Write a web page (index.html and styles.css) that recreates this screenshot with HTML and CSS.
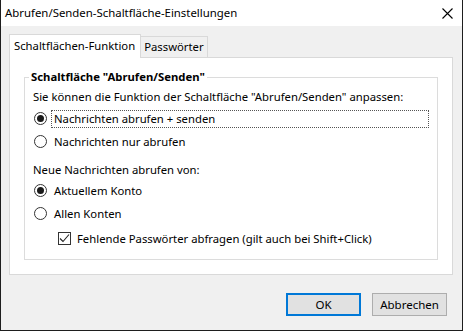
FILE: index.html
```html
<!DOCTYPE html>
<html lang="de">
<head>
<meta charset="utf-8">
<title>Abrufen/Senden-Schaltfläche-Einstellungen</title>
<link rel="stylesheet" href="styles.css">
</head>
<body>
<div class="window">
  <div class="titlebar">
    <span class="title">Abrufen/Senden-Schaltfläche-Einstellungen</span>
    <svg class="close" width="11" height="11" viewBox="0 0 11 11"><path d="M0.5 0.5L10.5 10.5M10.5 0.5L0.5 10.5" stroke="#000" stroke-width="1.1" fill="none"/></svg>
  </div>
  <div class="content">
    <div class="tabs">
      <div class="tab active">Schaltflächen-Funktion</div>
      <div class="tab">Passwörter</div>
    </div>
    <div class="panel">
      <fieldset class="group">
        <legend>Schaltfläche "Abrufen/Senden"</legend>
        <div class="row text-row r-intro">Sie können die Funktion der Schaltfläche "Abrufen/Senden" anpassen:</div>
        <div class="row opt">
          <span class="radio checked"></span>
          <span class="label focus">Nachrichten abrufen + senden</span>
        </div>
        <div class="row opt gap2">
          <span class="radio"></span>
          <span class="label">Nachrichten nur abrufen</span>
        </div>
        <div class="row text-row gap7">Neue Nachrichten abrufen von:</div>
        <div class="row opt">
          <span class="radio checked"></span>
          <span class="label">Aktuellem Konto</span>
        </div>
        <div class="row opt gap2">
          <span class="radio"></span>
          <span class="label">Allen Konten</span>
        </div>
        <div class="row opt gap4 sub">
          <span class="check"><svg width="11" height="11" viewBox="0 0 11 11"><path d="M1 5.5L4 8.5L10 1.5" stroke="#222" stroke-width="1.1" fill="none"/></svg></span>
          <span class="label">Fehlende Passwörter abfragen (gilt auch bei Shift+Click)</span>
        </div>
      </fieldset>
    </div>
    <div class="footer">
      <button class="btn default">OK</button>
      <button class="btn">Abbrechen</button>
    </div>
  </div>
</div>
</body>
</html>
```

FILE: styles.css
```css
* { box-sizing: border-box; }
html, body { margin: 0; padding: 0; }
body {
  font-family: "Noto Sans", "Open Sans", sans-serif;
  font-size: 11.3px;
  color: #000;
  background: #f0f0f0;
}
.window {
  width: 463px;
  height: 331px;
  background: #f0f0f0;
  border: 1px solid #1e1e1e;
  border-top: 0;
  display: flex;
  flex-direction: column;
}
.titlebar {
  height: 26px;
  background: #fff;
  display: flex;
  align-items: center;
  justify-content: space-between;
  padding: 0 9px 0 4px;
  flex: none;
}
.title { font-size: 11.4px; line-height: 16px; }
.close { display: block; }
.content {
  padding: 8px 9px 0 8px;
  display: flex;
  flex-direction: column;
}
.tabs {
  display: flex;
  align-items: flex-end;
  height: 24px;
  margin-bottom: -1px;
  position: relative;
  z-index: 1;
}
.tab {
  height: 21px;
  margin-bottom: 1px;
  padding: 0 3px 0 3px;
  border: 1px solid #d9d9d9;
  border-left: 0;
  border-bottom: 0;
  background: #f0f0f0;
  display: flex;
  align-items: center;
  line-height: 16px;
}
.tab.active {
  height: 24px;
  margin-bottom: 0;
  padding: 0 5px 2px 4px;
  border-left: 1px solid #d9d9d9;
  background: #fff;
}
.panel {
  height: 218px;
  background: #fff;
  border: 1px solid #d9d9d9;
  padding: 11px 14px 0 14px;
}
.group {
  margin: 0;
  padding: 0 0 10px 8px;
  border: 1px solid #dcdcdc;
  min-width: 0;
}
.group legend {
  font-weight: bold;
  padding: 0 2px;
  margin-left: -4px;
  line-height: 16px;
  height: 16px;
}
.row {
  display: flex;
  align-items: center;
  height: 21px;
  line-height: 16px;
}
.row.r-intro { height: 23px; }
.gap2 { margin-top: 2px; }
.gap4 { margin-top: 4px; }
.gap7 { margin-top: 7px; }
.radio {
  width: 13px;
  height: 13px;
  border: 1px solid #333;
  border-radius: 50%;
  margin-left: 1px;
  background: #fff;
  display: flex;
  align-items: center;
  justify-content: center;
  flex: none;
}
.radio.checked::after {
  content: "";
  width: 7px;
  height: 7px;
  border-radius: 50%;
  background: #1a1a1a;
}
.label {
  margin-left: 4px;
  padding: 0 2px;
  height: 18px;
  display: flex;
  align-items: center;
  border: 1px dotted transparent;
}
.label.focus {
  flex: 1;
  margin-right: 8px;
  border-color: #555;
}
.sub .check {
  margin-left: 25px;
}
.check {
  width: 13px;
  height: 13px;
  border: 1px solid #333;
  background: #fff;
  display: flex;
  align-items: center;
  justify-content: center;
  flex: none;
}
.check svg { display: block; }
.sub .label { margin-left: 3px; }
.footer {
  display: flex;
  justify-content: flex-end;
  gap: 11px;
  margin-top: 18px;
  padding-right: 6px;
}
.btn {
  width: 75px;
  height: 23px;
  background: #e1e1e1;
  border: 1px solid #adadad;
  font-family: inherit;
  font-size: 11.5px;
  color: #000;
  padding: 0;
  border-radius: 0;
}
.btn.default {
  border: 2px solid #0078d7;
}
```
